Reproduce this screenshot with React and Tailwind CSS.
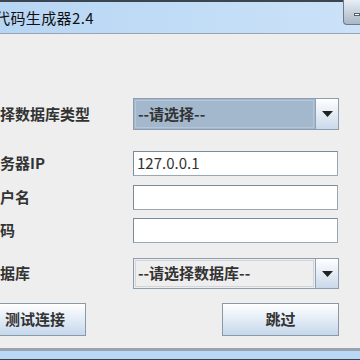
import React from 'react';

const FONT = { fontFamily: '"Noto Sans CJK SC", "Liberation Sans", sans-serif' };

function Arrow() {
  return (
    <div className="w-[23px] h-full border-l border-[#8fa1b3] bg-gradient-to-b from-white to-[#c9d9ea] flex items-center justify-center">
      <svg width="11" height="6" viewBox="0 0 11 6">
        <path d="M0 0 L11 0 L5.5 6 Z" fill="#222" />
      </svg>
    </div>
  );
}

function Row({ label, children, className }) {
  return (
    <div className={`flex items-center ${className}`}>
      <div className="w-[148px] -ml-[15px] shrink-0 text-[15px] font-bold text-[#333] whitespace-nowrap">{label}</div>
      {children}
    </div>
  );
}

function Input({ value }) {
  return (
    <div className="w-[205px] h-[25px] bg-white border border-[#9aa7b4] border-t-[#7d8a97] border-l-[#7d8a97] flex items-center px-[3px] text-[15px] text-[#333]">
      {value}
    </div>
  );
}

export default function App() {
  return (
    <div className="w-[360px] h-[360px] overflow-hidden bg-[#eeeeee] flex flex-col" style={FONT}>
      {/* 标题栏 */}
      <div className="h-[34px] shrink-0 border-t-2 border-[#3b4550] border-b border-b-[#9aa4ae] bg-gradient-to-r from-[#b7d6f4] to-[#cbe2f8] flex items-start relative">
        <div className="-ml-[5px] mt-[5px] text-[15px] tracking-[0.4px] text-[#111] whitespace-nowrap">代码生成器2.4</div>
        <div className="absolute right-0 -top-[2px] w-[17px] h-[25px] rounded-bl-[4px] border-l border-b border-[#6e7a86] bg-gradient-to-b from-[#e8eef5] to-[#a9b7c6] flex items-center justify-end">
          <div className="w-[6px] h-[3px] bg-white border border-[#56606b] mt-[4px]"></div>
        </div>
      </div>

      {/* 表单 */}
      <div className="flex-1 flex flex-col">
        <Row label="选择数据库类型" className="mt-[64px]">
          <div className="w-[206px] h-[32px] border border-[#8c9db0] bg-[#a3b8cc] flex">
            <div className="flex-1 m-[1px] border border-[#b4c6d8] flex items-center px-[2px] text-[15px] font-bold text-[#333]">--请选择--</div>
            <Arrow />
          </div>
        </Row>
        <Row label="服务器IP" className="mt-[21px]">
          <Input value="127.0.0.1" />
        </Row>
        <Row label="用户名" className="mt-[9px]">
          <Input value="" />
        </Row>
        <Row label="密码" className="mt-[8px]">
          <Input value="" />
        </Row>
        <Row label="数据库" className="mt-[15px]">
          <div className="w-[206px] h-[31px] border border-[#8c9db0] bg-[#eeeeee] flex">
            <div className="flex-1 m-[1px] border border-[#d0d6dc] flex items-center px-[2px] text-[15px] font-bold text-[#333]">--请选择数据库--</div>
            <Arrow />
          </div>
        </Row>

        {/* 按钮 */}
        <div className="flex mt-[14px]">
          <button className="-ml-[16px] w-[102px] h-[33px] border border-[#8a99a8] bg-gradient-to-b from-white to-[#c6d8ec] text-[15px] font-bold text-[#333]">测试连接</button>
          <button className="ml-[136px] w-[117px] h-[33px] border border-[#8a99a8] bg-gradient-to-b from-white to-[#c6d8ec] text-[15px] font-bold text-[#333]">跳过</button>
        </div>
      </div>

      {/* 底部边框 */}
      <div className="h-[12px] shrink-0 border-t-[3px] border-[#9aa4ae] bg-[#b9d8f5] border-b border-b-[#3b4550]"></div>
    </div>
  );
}
